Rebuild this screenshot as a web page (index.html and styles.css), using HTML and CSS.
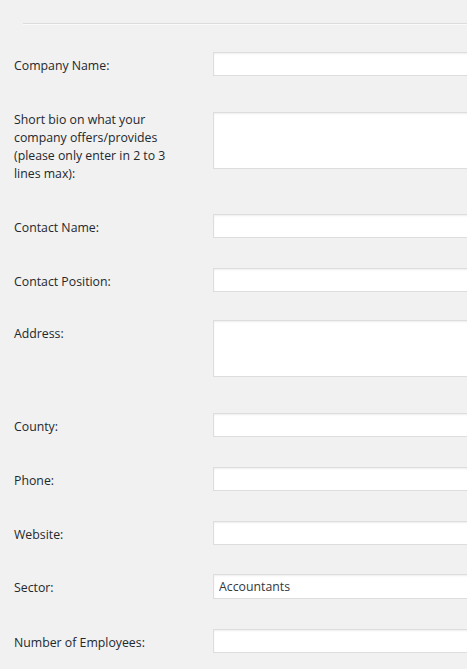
FILE: index.html
```html
<!DOCTYPE html>
<html lang="en">
<head>
    <meta charset="UTF-8">
    <title>Company Details</title>
    <link rel="stylesheet" href="styles.css">
</head>
<body>
    <hr class="divider">

    <form class="form-table">
        <div class="row row-first">
            <label for="company">Company Name:</label>
            <div class="field"><input type="text" id="company"></div>
        </div>
        <div class="row row-bio">
            <label for="bio">Short bio on what your<br>company offers/provides<br>(please only enter in 2 to 3<br>lines max):</label>
            <div class="field"><textarea id="bio"></textarea></div>
        </div>
        <div class="row">
            <label for="contact-name">Contact Name:</label>
            <div class="field"><input type="text" id="contact-name"></div>
        </div>
        <div class="row">
            <label for="contact-position">Contact Position:</label>
            <div class="field"><input type="text" id="contact-position"></div>
        </div>
        <div class="row row-address">
            <label for="address">Address:</label>
            <div class="field"><textarea id="address"></textarea></div>
        </div>
        <div class="row">
            <label for="county">County:</label>
            <div class="field"><input type="text" id="county"></div>
        </div>
        <div class="row">
            <label for="phone">Phone:</label>
            <div class="field"><input type="text" id="phone"></div>
        </div>
        <div class="row">
            <label for="website">Website:</label>
            <div class="field"><input type="text" id="website"></div>
        </div>
        <div class="row row-select">
            <label for="sector">Sector:</label>
            <div class="field">
                <select id="sector">
                    <option>Accountants</option>
                </select>
            </div>
        </div>
        <div class="row">
            <label for="employees">Number of Employees:</label>
            <div class="field"><input type="text" id="employees"></div>
        </div>
    </form>
</body>
</html>
```

FILE: styles.css
```css
* {
    box-sizing: border-box;
}

html, body {
    margin: 0;
    overflow: hidden;
}

body {
    background-color: #f1f1f1;
    color: #23282d;
    font-family: "Open Sans", "Noto Sans", sans-serif;
    font-size: 12.3px;
}

.divider {
    margin: 23px 0 12px 23px;
    border: 0;
    border-top: 1px solid #dcdcdc;
    border-bottom: 1px solid #fafafa;
    height: 0;
}

.row {
    display: flex;
    align-items: flex-start;
    padding: 15px 0 15px 14px;
}

.row label {
    flex: 0 0 199px;
    padding-top: 5px;
    line-height: 18px;
}

.field {
    flex: 0 0 auto;
}

.field input,
.field textarea,
.field select {
    display: block;
    width: 320px;
    margin: 0;
    background-color: #fff;
    border: 1px solid #ddd;
    box-shadow: inset 0 1px 2px rgba(0, 0, 0, .07);
    font-family: inherit;
    font-size: 12.3px;
    color: #32373c;
    border-radius: 0;
}

.field input {
    height: 24px;
}

.field textarea {
    height: 57px;
    resize: none;
}

.field select {
    height: 25px;
    padding: 0 0 0 5px;
    appearance: none;
    -webkit-appearance: none;
}

.row-first {
    padding-bottom: 21px;
}

.row-bio {
    padding: 13px 0 16px 14px;
}

.row-bio label {
    padding-top: 1px;
}

.row-bio textarea {
    margin-top: 2px;
}

.row-address {
    padding: 13px 0 21px 14px;
}

.row-select {
    padding-top: 14px;
}
```
